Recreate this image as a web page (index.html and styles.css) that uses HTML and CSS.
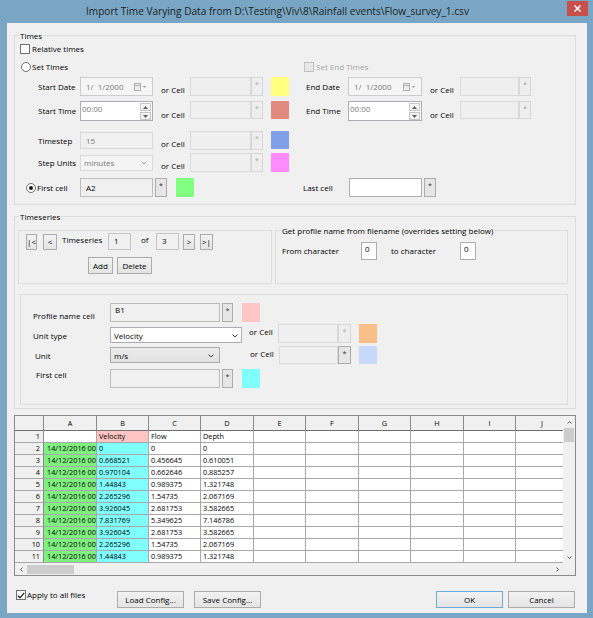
FILE: index.html
```html
<!DOCTYPE html>
<html>
<head>
<meta charset="utf-8">
<title>Import Time Varying Data</title>
<link rel="stylesheet" href="styles.css">
</head>
<body>
<div class="window">
  <div class="titlebar">
    <span class="title">Import Time Varying Data from D:\Testing\Viv\8\Rainfall events\Flow_survey_1.csv</span>
    <div class="close"><svg width="7" height="7" viewBox="0 0 7 7"><path d="M0.5 0.5L6.5 6.5M6.5 0.5L0.5 6.5" stroke="#fff" stroke-width="1.5"/></svg></div>
  </div>
  <div class="client">
    <!-- Times -->
    <div class="group times">
      <div class="legend">Times</div>
      <div class="row r1"><span class="chk"></span><span class="t">Relative times</span></div>
      <div class="row r2">
        <div class="settimes"><span class="radio"></span><span class="t">Set Times</span></div>
        <span class="chk dis"></span><span class="t gray endt">Set End Times</span>
      </div>
      <div class="row r3 frow">
        <span class="t lbl">Start Date</span>
        <div class="ctl date"><span class="val">1/&nbsp; 1/2000</span>
          <svg class="cal" width="13" height="8" viewBox="0 0 13 8"><rect x="0.5" y="0.5" width="6" height="7" fill="#ececec" stroke="#b0b0b0"/><path d="M1 2.5H6" stroke="#b0b0b0"/><path d="M8.5 3L12.5 3L10.5 5Z" fill="#a8a8a8"/></svg>
        </div>
        <span class="t orcell">or Cell</span>
        <div class="cellin"></div><div class="star dis">*</div>
        <div class="sw yellow"></div>
        <span class="t rlbl">End Date</span>
        <div class="ctl date rctl"><span class="val">1/&nbsp; 1/2000</span>
          <svg class="cal" width="13" height="8" viewBox="0 0 13 8"><rect x="0.5" y="0.5" width="6" height="7" fill="#ececec" stroke="#b0b0b0"/><path d="M1 2.5H6" stroke="#b0b0b0"/><path d="M8.5 3L12.5 3L10.5 5Z" fill="#a8a8a8"/></svg>
        </div>
        <span class="t orcell rorcell">or Cell</span>
        <div class="cellin rcell"></div><div class="star dis">*</div>
      </div>
      <div class="row r4 frow">
        <span class="t lbl">Start Time</span>
        <div class="ctl time"><span class="val">00:00</span>
          <div class="spin"><span><svg width="5" height="3" viewBox="0 0 5 3"><path d="M0 3L2.5 0L5 3Z" fill="#606060"/></svg></span><span><svg width="5" height="3" viewBox="0 0 5 3"><path d="M0 0L2.5 3L5 0Z" fill="#606060"/></svg></span></div>
        </div>
        <span class="t orcell">or Cell</span>
        <div class="cellin"></div><div class="star dis">*</div>
        <div class="sw salmon"></div>
        <span class="t rlbl">End Time</span>
        <div class="ctl time rctl"><span class="val">00:00</span>
          <div class="spin"><span><svg width="5" height="3" viewBox="0 0 5 3"><path d="M0 3L2.5 0L5 3Z" fill="#606060"/></svg></span><span><svg width="5" height="3" viewBox="0 0 5 3"><path d="M0 0L2.5 3L5 0Z" fill="#606060"/></svg></span></div>
        </div>
        <span class="t orcell rorcell">or Cell</span>
        <div class="cellin rcell"></div><div class="star dis">*</div>
      </div>
      <div class="row r5 frow">
        <span class="t lbl">Timestep</span>
        <div class="ctl disedit"><span class="val">15</span></div>
        <span class="t orcell">or Cell</span>
        <div class="cellin"></div><div class="star dis">*</div>
        <div class="sw blue"></div>
      </div>
      <div class="row r6 frow">
        <span class="t lbl">Step Units</span>
        <div class="ctl discombo"><span class="val">minutes</span>
          <svg class="chev" width="6" height="4" viewBox="0 0 6 4"><path d="M0.5 0.5L3 3L5.5 0.5" fill="none" stroke="#a0a0a0"/></svg>
        </div>
        <span class="t orcell">or Cell</span>
        <div class="cellin"></div><div class="star dis">*</div>
        <div class="sw pink"></div>
      </div>
      <div class="row r7">
        <div class="fc"><span class="radio on"></span><span class="t">First cell</span></div>
        <div class="ctl roedit"><span>A2</span></div>
        <div class="star">*</div>
        <div class="sw green"></div>
        <span class="t lastlbl">Last cell</span>
        <div class="ctl wedit"></div>
        <div class="star">*</div>
      </div>
    </div>

    <!-- Timeseries -->
    <div class="group tseries">
      <div class="legend">Timeseries</div>
      <div class="tsrow">
        <div class="panel nav">
          <div class="row navrow">
            <div class="btn nb nb1">|&lt;</div>
            <div class="btn nb nb2">&lt;</div>
            <span class="t tslbl">Timeseries</span>
            <div class="numbox">1</div>
            <span class="t oflbl">of</span>
            <div class="numbox">3</div>
            <div class="btn nb nb3">&gt;</div>
            <div class="btn nb nb4">&gt;|</div>
          </div>
          <div class="row adrow">
            <div class="btn addb">Add</div>
            <div class="btn delb">Delete</div>
          </div>
        </div>
        <div class="panel gp">
          <div class="legend gplegend">Get profile name from filename (overrides setting below)</div>
          <div class="row gprow">
            <span class="t fromlbl">From character</span>
            <div class="charbox">0</div>
            <span class="t tolbl">to character</span>
            <div class="charbox">0</div>
          </div>
        </div>
      </div>
      <div class="panel prof">
        <div class="row p1">
          <span class="t plbl">Profile name cell</span>
          <div class="pedit roedit"><span>B1</span></div>
          <div class="star pstar">*</div>
          <div class="sw lpink psw"></div>
        </div>
        <div class="row p2">
          <span class="t plbl">Unit type</span>
          <div class="combo white"><span>Velocity</span>
            <svg class="chev" width="6" height="4" viewBox="0 0 6 4"><path d="M0.5 0.5L3 3L5.5 0.5" fill="none" stroke="#404040"/></svg>
          </div>
          <span class="t orcell2">or Cell</span>
          <div class="cellin c2"></div><div class="star dis s2">*</div>
          <div class="sw orange sw2"></div>
        </div>
        <div class="row p3">
          <span class="t plbl">Unit</span>
          <div class="combo grayc"><span>m/s</span>
            <svg class="chev" width="6" height="4" viewBox="0 0 6 4"><path d="M0.5 0.5L3 3L5.5 0.5" fill="none" stroke="#404040"/></svg>
          </div>
          <span class="t orcell3">or Cell</span>
          <div class="cellin c3"></div><div class="star s2">*</div>
          <div class="sw lblue sw2"></div>
        </div>
        <div class="row p4">
          <span class="t plbl">First cell</span>
          <div class="pedit roedit"></div>
          <div class="star pstar">*</div>
          <div class="sw cyan psw"></div>
        </div>
      </div>
    </div>

    <!-- Spreadsheet -->
    <div class="sheet">
      <div class="grid">
        <div class="h"></div><div class="h">A</div><div class="h">B</div><div class="h">C</div><div class="h">D</div><div class="h">E</div><div class="h">F</div><div class="h">G</div><div class="h">H</div><div class="h">I</div><div class="h">J</div>
        <div class="rh">1</div><div></div><div class="bp">Velocity</div><div>Flow</div><div>Depth</div><div></div><div></div><div></div><div></div><div></div><div></div>
        <div class="rh">2</div><div class="ga">14/12/2016 00</div><div class="bc">0</div><div>0</div><div>0</div><div></div><div></div><div></div><div></div><div></div><div></div>
        <div class="rh">3</div><div class="ga">14/12/2016 00</div><div class="bc">0.668521</div><div>0.456645</div><div>0.610051</div><div></div><div></div><div></div><div></div><div></div><div></div>
        <div class="rh">4</div><div class="ga">14/12/2016 00</div><div class="bc">0.970104</div><div>0.662646</div><div>0.885257</div><div></div><div></div><div></div><div></div><div></div><div></div>
        <div class="rh">5</div><div class="ga">14/12/2016 00</div><div class="bc">1.44843</div><div>0.989375</div><div>1.321748</div><div></div><div></div><div></div><div></div><div></div><div></div>
        <div class="rh">6</div><div class="ga">14/12/2016 00</div><div class="bc">2.265296</div><div>1.54735</div><div>2.067169</div><div></div><div></div><div></div><div></div><div></div><div></div>
        <div class="rh">7</div><div class="ga">14/12/2016 00</div><div class="bc">3.926045</div><div>2.681753</div><div>3.582665</div><div></div><div></div><div></div><div></div><div></div><div></div>
        <div class="rh">8</div><div class="ga">14/12/2016 00</div><div class="bc">7.831769</div><div>5.349625</div><div>7.146786</div><div></div><div></div><div></div><div></div><div></div><div></div>
        <div class="rh">9</div><div class="ga">14/12/2016 00</div><div class="bc">3.926045</div><div>2.681753</div><div>3.582665</div><div></div><div></div><div></div><div></div><div></div><div></div>
        <div class="rh">10</div><div class="ga">14/12/2016 00</div><div class="bc">2.265296</div><div>1.54735</div><div>2.067169</div><div></div><div></div><div></div><div></div><div></div><div></div>
        <div class="rh">11</div><div class="ga">14/12/2016 00</div><div class="bc">1.44843</div><div>0.989375</div><div>1.321748</div><div></div><div></div><div></div><div></div><div></div><div></div>
      </div>
      <div class="vs">
        <div class="arr"><svg width="5" height="3" viewBox="0 0 5 3"><path d="M0.5 2.5L2.5 0.5L4.5 2.5" fill="none" stroke="#606060"/></svg></div>
        <div class="vthumb"></div>
        <div class="fill"></div>
        <div class="arr"><svg width="5" height="3" viewBox="0 0 5 3"><path d="M0.5 0.5L2.5 2.5L4.5 0.5" fill="none" stroke="#606060"/></svg></div>
      </div>
      <div class="hs">
        <div class="arr"><svg width="3" height="5" viewBox="0 0 3 5"><path d="M2.5 0.5L0.5 2.5L2.5 4.5" fill="none" stroke="#606060"/></svg></div>
        <div class="hthumb"></div>
        <div class="fill"></div>
        <div class="arr"><svg width="3" height="5" viewBox="0 0 3 5"><path d="M0.5 0.5L2.5 2.5L0.5 4.5" fill="none" stroke="#606060"/></svg></div>
      </div>
      <div class="corner"></div>
    </div>

    <!-- Footer -->
    <div class="footer">
      <div class="apply"><span class="chk"><svg width="8" height="7" viewBox="0 0 8 7"><path d="M0.8 3.6L3 5.8L7.2 0.8" fill="none" stroke="#222" stroke-width="1.3"/></svg></span><span class="t">Apply to all files</span></div>
      <div class="btn fbtn">Load Config...</div>
      <div class="btn fbtn save">Save Config...</div>
      <div class="btn fbtn ok">OK</div>
      <div class="btn fbtn cancel">Cancel</div>
    </div>
  </div>
</div>
</body>
</html>
```

FILE: styles.css
```css
* { box-sizing: border-box; }
html, body { margin: 0; padding: 0; }
body {
  width: 593px; height: 618px; overflow: hidden;
  background: #78a6c4;
  font-family: "Open Sans", "Noto Sans", "DejaVu Sans", sans-serif;
  font-size: 8px; color: #000;
}
.window { width: 593px; height: 618px; display: flex; flex-direction: column; background: #78a6c4; }
.titlebar { height: 23px; flex: none; display: flex; align-items: center; position: relative; }
.title { margin-left: 86px; font-size: 10.1px; color: #1f1f1f; white-space: nowrap; line-height: 14px; margin-top: -1px; }
.close {
  position: absolute; left: 567px; top: 1px; width: 21px; height: 15px;
  background: #c7504b; display: flex; align-items: center; justify-content: center;
}
.client {
  flex: 1; margin: 0 6px 5px 7px; background: #f0f0f0;
  display: flex; flex-direction: column; overflow: hidden;
}

/* group boxes */
.group { flex: none; border: 1px solid #dcdcdc; margin: 0 11px 0 7px; }
.times { margin-top: 12px; height: 170px; }
.legend {
  width: max-content; margin: -6px 0 0 4px; padding: 0 1px;
  height: 12px; line-height: 12px; background: #f0f0f0; white-space: nowrap;
}
.row { display: flex; align-items: center; flex: none; }
.t { white-space: nowrap; line-height: 12px; flex: none; }
.gray { color: #a6a6a6; }

/* checkbox / radio */
.chk {
  width: 10px; height: 10px; border: 1px solid #707070; background: #fff; flex: none;
  display: flex; align-items: center; justify-content: center;
}
.chk.dis { border-color: #c2c2c2; background: #e8e8e8; }
.radio {
  width: 10px; height: 10px; border: 1px solid #707070; border-radius: 50%; background: #fff;
  flex: none; display: flex; align-items: center; justify-content: center;
}
.radio.on::after { content: ""; width: 4px; height: 4px; border-radius: 50%; background: #1a1a1a; }

/* times rows */
.r1 { margin-top: 2px; height: 10px; padding-left: 5px; }
.r1 .t { margin-left: 2px; }
.r2 { margin-top: 8px; height: 10px; padding-left: 6px; }
.settimes { display: flex; align-items: center; width: 283px; flex: none; }
.settimes .t { margin-left: 1px; }
.endt { margin-left: 2px; }
.r3 { margin-top: 5px; height: 19px; }
.r4 { margin-top: 5px; height: 20px; }
.r5 { margin-top: 10px; height: 19px; }
.r6 { margin-top: 3px; height: 19px; }
.r7 { margin-top: 6px; height: 19px; padding-left: 11px; }
.frow { padding-left: 23px; }
.lbl { width: 42px; }
.orcell { margin-left: 8px; width: 29px; align-self: flex-end; }
.rorcell { width: 30px; }
.rlbl { margin-left: 17px; width: 42px; }

.ctl {
  width: 73px; height: 19px; flex: none; display: flex; align-items: center;
  padding-left: 5px; position: relative; border: 1px solid #abadb3; background: #fff;
}
.rctl { width: 74px; }
.val { color: #7a7a7a; white-space: nowrap; }
.date { background: #f5f5f5; border-color: #cdcdcd; }
.date .cal { position: absolute; right: 5px; top: 5px; }
.time { height: 20px; padding-left: 1px; }
.time .val { align-self: flex-start; margin-top: 1px; }
.spin { position: absolute; right: 1px; top: 1px; width: 11px; display: flex; flex-direction: column; gap: 1px; }
.spin span { height: 8px; border: 1px solid #c6c6c6; background: #f4f4f4; display: flex; align-items: center; justify-content: center; }
.r4 .ctl, .r4 .cellin, .r4 .star, .r4 .sw { align-self: flex-start; }
.r4 .cellin, .r4 .star, .r4 .sw { height: 18px; }
.disedit { background: #f0f0f0; border-color: #d9d9d9; height: 17px; }
.discombo { background: #f4f4f4; border-color: #dadada; height: 16px; padding-left: 3px; }
.discombo .chev { position: absolute; right: 5px; top: 5px; }
.roedit { background: #f0f0f0; border-color: #bdbdbd; color: #000; }
.wedit { background: #fff; border-color: #abadb3; }

.cellin { width: 61px; height: 19px; flex: none; border: 1px solid #dadada; background: #efefef; }
.rcell { width: 59px; }
.star {
  width: 12px; height: 19px; flex: none; border: 1px solid #adadad; background: #e6e6e6;
  display: flex; justify-content: center; padding-top: 2px; font-size: 7px; line-height: 9px; color: #303030;
}
.star.dis { border-color: #d7d7d7; background: #eeeeee; color: #a8a8a8; }
.sw { margin-left: 8px; width: 18px; height: 19px; flex: none; }
.r5 .sw { height: 18px; align-self: flex-start; }
.r7 .star { margin-left: 2px; }
.r7 .sw { margin-left: 9px; }
.fc { display: flex; align-items: center; width: 54px; flex: none; }
.fc .t { margin-left: 1px; }
.lastlbl { margin-left: 109px; width: 46px; }

.yellow { background: #ffff80; }
.salmon { background: #e08a80; }
.blue { background: #809fe8; }
.pink { background: #ff8aff; }
.green { background: #80ff80; }
.lpink { background: #ffc6c6; }
.orange { background: #f8c088; }
.lblue { background: #c8d8f8; }
.cyan { background: #80ffff; }

/* timeseries */
.tseries { margin-top: 11px; height: 193px; }
.tsrow { display: flex; margin-top: 7px; padding-left: 3px; }
.panel { border: 1px solid #dcdcdc; flex: none; }
.nav { width: 254px; height: 54px; }
.gp { margin-left: 3px; width: 293px; height: 54px; }
.btn {
  border: 1px solid #acacac; background: linear-gradient(#f2f2f2, #e4e4e4);
  display: flex; align-items: center; justify-content: center; flex: none; height: 17px; white-space: nowrap;
}
.navrow { margin-top: 2px; height: 17px; padding-left: 7px; }
.nb { height: 16px; }
.nb1 { width: 11px; }
.nb2 { width: 14px; margin-left: 6px; }
.tslbl { width: 51px; padding-left: 5px; align-self: flex-start; margin-top: 1px; }
.numbox {
  width: 23px; height: 17px; flex: none; border: 1px solid #c4c4c4; background: #f0f0f0;
  padding-left: 5px; padding-top: 2px; line-height: 10px;
}
.oflbl { width: 25px; padding-left: 10px; align-self: flex-start; margin-top: 1px; }
.nb3 { width: 12px; margin-left: 4px; }
.nb4 { width: 13px; margin-left: 5px; }
.adrow { margin-top: 7px; padding-left: 69px; height: 17px; }
.addb { width: 25px; }
.delb { width: 35px; margin-left: 4px; }
.gplegend { margin: -6px 0 0 5px; }
.gprow { margin-top: 5px; height: 18px; padding-left: 6px; }
.fromlbl { width: 79px; }
.tolbl { width: 83px; padding-left: 14px; }
.charbox {
  width: 16px; height: 18px; flex: none; border: 1px solid #abadb3; background: #fff;
  padding-left: 3px; padding-top: 1px; line-height: 10px;
}

.prof { margin: 10px 0 0 5px; width: 548px; height: 111px; }
.p1 { margin-top: 8px; height: 19px; padding-left: 12px; }
.p2 { margin-top: 2px; height: 19px; padding-left: 12px; }
.p3 { margin-top: 3px; height: 18px; padding-left: 12px; }
.p4 { margin-top: 5px; height: 19px; padding-left: 12px; }
.plbl { width: 77px; }
.p1 .plbl { align-self: flex-end; }
.p2 .plbl { margin-top: 4px; }
.p3 .plbl { padding-left: 2px; margin-top: 1px; }
.p4 .plbl { padding-left: 3px; align-self: flex-start; }
.pedit {
  width: 110px; height: 19px; flex: none; border: 1px solid #bdbdbd;
  padding-left: 4px; padding-top: 1px; line-height: 10px;
}
.pstar { margin-left: 2px; width: 11px; }
.psw { margin-left: 9px; }
.combo {
  height: 16px; flex: none; position: relative; display: flex; align-items: center; padding-left: 3px;
}
.combo .chev { position: absolute; top: 6px; }
.white { width: 132px; background: #fff; border: 1px solid #abadb3; align-self: flex-end; margin-bottom: 0; }
.white .chev { right: 3px; }
.grayc { width: 110px; background: linear-gradient(#ececec, #e2e2e2); border: 1px solid #acacac; }
.grayc .chev { right: 5px; }
.orcell2 { margin-left: 7px; width: 29px; align-self: flex-start; margin-top: 2px; }
.orcell3 { margin-left: 30px; width: 29px; margin-top: -2px; }
.c2 { width: 60px; }
.c3 { width: 59px; height: 18px; }
.s2 { width: 13px; }
.p3 .star { height: 18px; }
.sw2 { margin-left: 8px; }
.p3 .sw2 { height: 18px; }

/* spreadsheet */
.sheet {
  flex: none; margin: 6px 11px 0 7px; height: 161px; border: 1px solid #8a8a8a; background: #fff;
  display: grid; grid-template-columns: 548px 12px; grid-template-rows: 147px 12px;
}
.grid {
  overflow: hidden; display: grid;
  grid-template-columns: 29px 53px 52px 52px 53px 52px 53px 52px 53px 52px 53px;
  grid-template-rows: 15px repeat(11, 12px);
  font-size: 7.3px; color: #000;
}
.grid > div {
  border-right: 1px solid #a8a8a8; border-bottom: 1px solid #a8a8a8;
  white-space: nowrap; overflow: hidden; line-height: 11px; padding-left: 2px;
}
.grid > .h {
  background: #f0f0f0; text-align: center; line-height: 14px; padding-left: 0;
  border-bottom-color: #6e6e6e; border-right-color: #8a8a8a;
}
.grid > .rh { background: #f0f0f0; text-align: right; padding: 0 3px 0 0; border-right-color: #8a8a8a; }
.grid > .ga { background: #80f080; padding-left: 3px; }
.grid > .bc { background: #80ffff; }
.grid > .bp { background: #ffc4c4; }

.vs, .hs, .corner { background: #f0f0f0; }
.vs { display: flex; flex-direction: column; }
.hs { display: flex; flex-direction: row; align-items: center; }
.arr { width: 12px; height: 12px; flex: none; display: flex; align-items: center; justify-content: center; }
.fill { flex: 1; }
.vthumb { width: 10px; height: 14px; margin-left: 1px; background: #cdcdcd; flex: none; }
.hthumb { width: 47px; height: 9px; background: #cdcdcd; flex: none; }

/* footer */
.footer { display: flex; align-items: center; margin-top: 15px; height: 17px; padding-left: 9px; flex: none; }
.apply { display: flex; align-items: center; width: 101px; flex: none; align-self: flex-start; margin-top: -2px; }
.apply .t { margin-left: 1px; }
.fbtn { width: 67px; }
.save { margin-left: 10px; }
.ok { margin-left: 175px; border-color: #6ea9dd; }
.cancel { margin-left: 5px; }
```
